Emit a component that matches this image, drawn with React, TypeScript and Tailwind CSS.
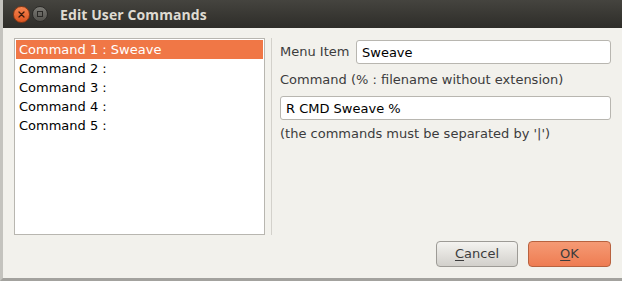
import { useState } from "react";

const commands = ["Command 1 : Sweave", "Command 2 :", "Command 3 :", "Command 4 :", "Command 5 :"];

const EditUserCommands = () => {
    const [selected, setSelected] = useState(0);
    const [menuItem, setMenuItem] = useState("Sweave");
    const [command, setCommand] = useState("R CMD Sweave %");

    return (
        <div className="w-[622px] h-[281px] flex flex-col bg-[#f2f1ec] border-l-[3px] border-b-[3px] border-l-[#c4c3be] border-b-[#a3a29e] overflow-hidden font-['DejaVu_Sans',sans-serif] text-[13px] text-[#3c3c3c]">
            {/* title bar */}
            <div className="h-[28px] shrink-0 flex items-center bg-gradient-to-b from-[#45443f] to-[#2e2d29] pl-[10px]">
                <div className="w-[17px] h-[17px] rounded-full bg-gradient-to-b from-[#f7844e] to-[#dc5520] border border-[#8a3a16] flex items-center justify-center">
                    <svg width="7" height="7" viewBox="0 0 7 7">
                        <path d="M1 1 L6 6 M6 1 L1 6" stroke="#3a1a0c" strokeWidth="1.3" strokeLinecap="round" />
                    </svg>
                </div>
                <div className="ml-[2px] w-[16px] h-[16px] rounded-full bg-gradient-to-b from-[#7a7974] to-[#54534e] border border-[#2c2b28] flex items-center justify-center">
                    <div className="w-[6px] h-[6px] border border-[#2a2926]" />
                </div>
                <span className="ml-[12px] font-['Open_Sans',sans-serif] font-bold text-[14px] text-[#dfdbd2] tracking-[0.1px]">
                    Edit User Commands
                </span>
            </div>

            {/* body */}
            <div className="flex-1 flex flex-col pl-[11px] pr-[11px] pt-[10px] pb-[12px]">
                <div className="flex h-[197px]">
                    <div className="w-[251px] h-full bg-white border border-[#b8b6b0] pt-[1px]">
                        {commands.map((c, i) => (
                            <div
                                key={c}
                                onClick={() => setSelected(i)}
                                className={
                                    i === selected
                                        ? "h-[19px] mx-[1px] pl-[3px] flex items-center bg-[#f07746] text-white"
                                        : "h-[19px] mx-[1px] pl-[3px] flex items-center text-black"
                                }
                            >
                                {c}
                            </div>
                        ))}
                    </div>
                    <div className="w-[6px] h-full" />
                    <div className="flex-1 h-full border-l border-[#d3d1cb] pl-[8px] pt-[2px] flex flex-col">
                        <div className="flex items-center h-[24px]">
                            <span className="w-[76px] shrink-0">Menu Item</span>
                            <input
                                value={menuItem}
                                onChange={(e) => setMenuItem(e.target.value)}
                                className="flex-1 h-[24px] rounded-[3px] border border-[#b8b6b0] bg-white px-[5px] text-black outline-none"
                            />
                        </div>
                        <div className="mt-[4px] h-[23px] flex items-center">Command (% : filename without extension)</div>
                        <input
                            value={command}
                            onChange={(e) => setCommand(e.target.value)}
                            className="mt-[5px] w-full h-[24px] rounded-[3px] border border-[#b8b6b0] bg-white px-[5px] text-black outline-none"
                        />
                        <div className="mt-[3px] h-[21px] flex items-center">(the commands must be separated by '|')</div>
                    </div>
                </div>

                <div className="flex justify-end gap-[10px] mt-[6px]">
                    <button className="w-[82px] h-[26px] rounded-[4px] border border-[#9d9b96] bg-gradient-to-b from-[#f4f3f0] to-[#d2d0cb] text-[#3c3c3c]">
                        <span className="underline underline-offset-2">C</span>ancel
                    </button>
                    <button className="w-[83px] h-[26px] rounded-[4px] border border-[#b8623f] bg-gradient-to-b from-[#f59a74] to-[#ee7c52] text-[#3c3c3c]">
                        <span className="underline underline-offset-2">O</span>K
                    </button>
                </div>
            </div>
        </div>
    );
};

export default function App() {
    return <EditUserCommands />;
}
